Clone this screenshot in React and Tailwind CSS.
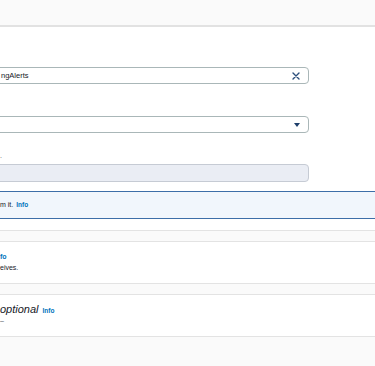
import React from 'react';

const Field = ({ children, className = '' }) => (
  <div
    className={`-ml-[12px] w-[321px] h-[17px] rounded-[4px] border border-[#aab7b8] flex items-center pl-[12px] pr-[8px] text-[7.5px] ${className}`}
  >
    {children}
  </div>
);

const InfoLink = ({ children = 'Info', className = '' }) => (
  <a className={`text-[#0073bb] font-bold text-[6.5px] ${className}`}>{children}</a>
);

const Band = () => (
  <div className="h-[12px] bg-[#fafafa] border-y border-[#e3e3e3]" />
);

export default function App() {
  return (
    <div className="w-[375px] h-[366px] overflow-hidden bg-[#fafafa] text-[#16191f] font-['Liberation_Sans',Arial,sans-serif]">
      {/* page header strip */}
      <div className="h-[27px] bg-[#fafafa] border-b-2 border-[#e2e2e2]" />

      {/* form fields */}
      <div className="bg-white pt-[40px] pb-[9px]">
        <Field>
          <span className="flex-1">ngAlerts</span>
          <svg width="8" height="8" viewBox="0 0 8 8" className="text-[#2c4f7c]">
            <path d="M1 1L7 7M7 1L1 7" stroke="currentColor" strokeWidth="1.4" strokeLinecap="round" />
          </svg>
        </Field>

        <Field className="mt-[32px]">
          <span className="flex-1" />
          <svg width="6" height="4" viewBox="0 0 6 4" className="text-[#1e3f6b]">
            <path d="M0 0H6L3 4Z" fill="currentColor" />
          </svg>
        </Field>

        <div className="mt-[18px] h-[9px] text-[7px] leading-[9px] text-[#545b64]">.</div>
        <Field className="mt-[4px] h-[18px] bg-[#eaedf4] border-[#c6cbd4]" />
      </div>

      {/* info alert */}
      <div className="h-[28px] bg-[#f1f6fc] border-y border-[#3d6ea8] flex items-center text-[7px]">
        <span>m it.</span>
        <InfoLink className="ml-[3px]" />
      </div>
      <div className="h-[11px] bg-white" />

      <Band />

      <div className="h-[41px] bg-white flex flex-col justify-center gap-[1px] text-[7px]">
        <InfoLink className="text-[7px]">fo</InfoLink>
        <span>eives.</span>
      </div>

      <Band />

      <div className="h-[41px] bg-white flex flex-col pt-[7px]">
        <div className="flex items-baseline gap-[4px]">
          <span className="italic text-[11px] leading-[14px]">optional</span>
          <InfoLink />
        </div>
        <span className="text-[7px] leading-[10px] text-[#545b64]">–</span>
      </div>
      <div className="border-t border-[#e3e3e3]" />
    </div>
  );
}
